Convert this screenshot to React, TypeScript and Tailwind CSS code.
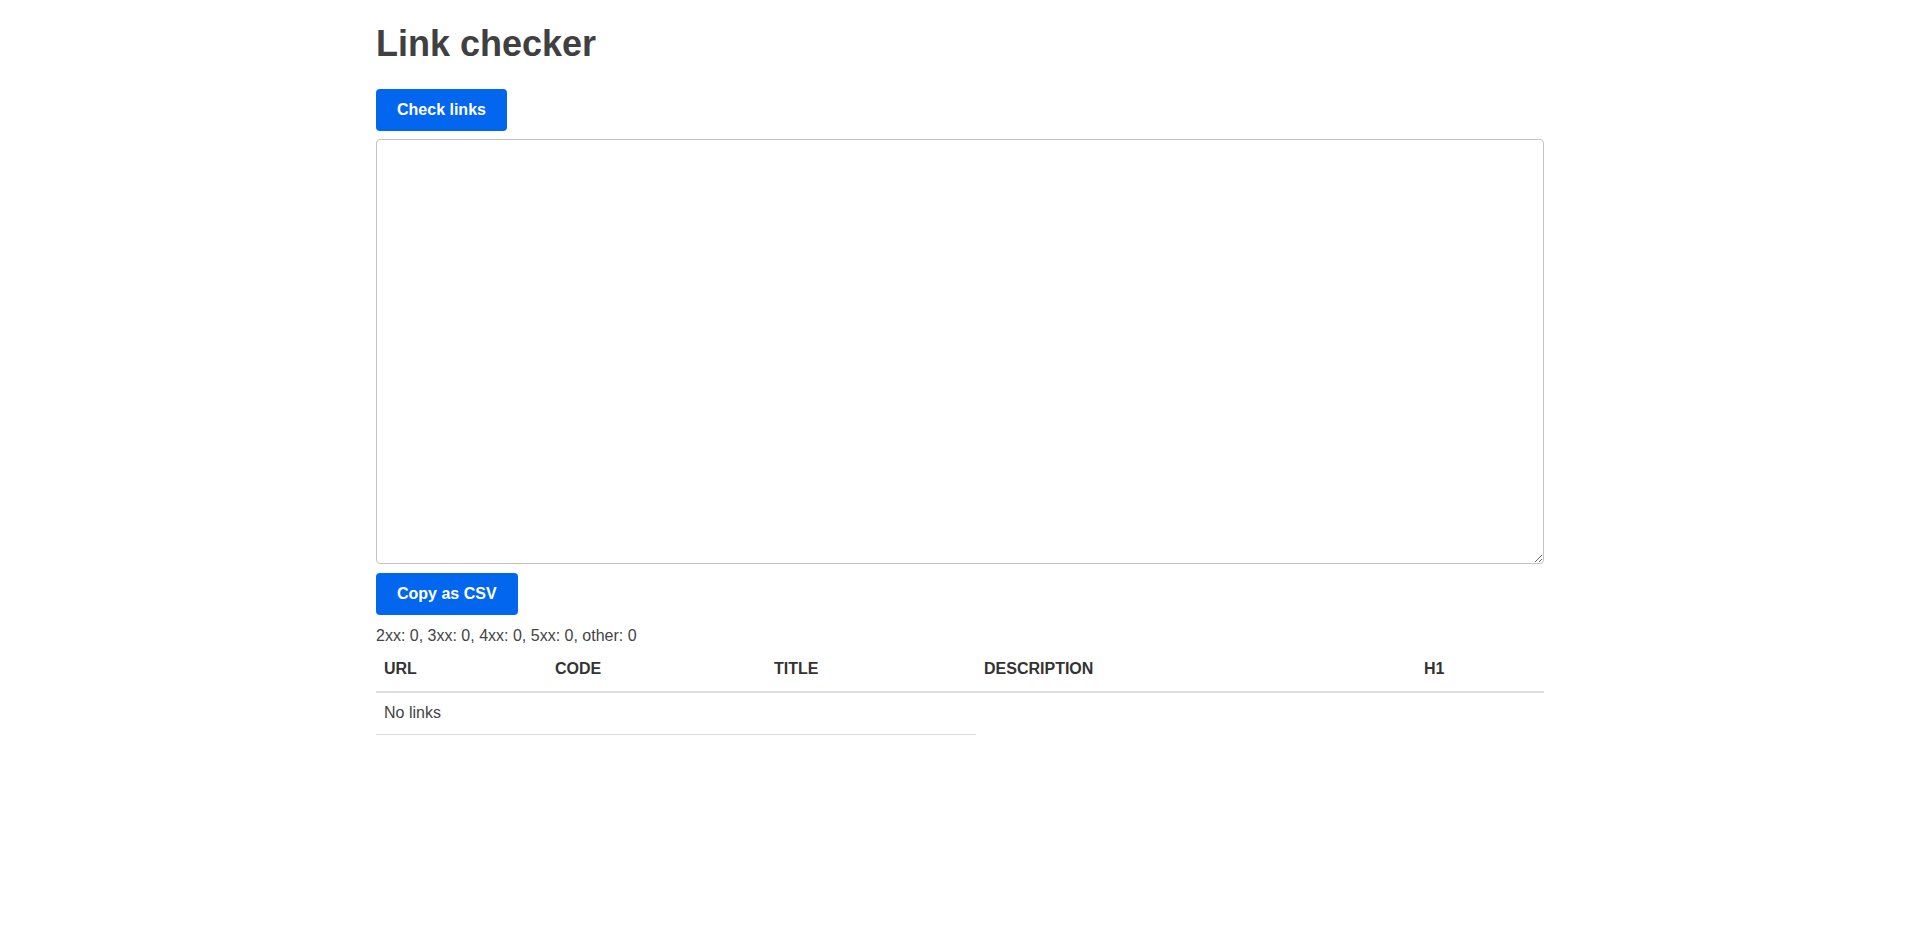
import React from "react";

export default function App() {
  return (
    <div className="min-h-screen bg-white">
      <div className="mx-auto max-w-[1200px] px-4 font-['Liberation_Sans',Arial,sans-serif] text-[16px] leading-6 text-[#444444]">
        <h1 className="pt-[22px] mb-6 text-[36px] font-bold leading-[43px] text-[#404040]">Link checker</h1>
        <button className="h-[42px] px-[21px] rounded bg-[#0366ee] text-white font-bold text-[16px] leading-6">
          Check links
        </button>
        <textarea className="block mt-2 w-full h-[425px] border border-[#c4c4c4] rounded bg-white" />
        <button className="mt-[9px] h-[42px] px-[21px] rounded bg-[#0366ee] text-white font-bold text-[16px] leading-6">
          Copy as CSV
        </button>
        <div className="mt-[9px]">2xx: 0, 3xx: 0, 4xx: 0, 5xx: 0, other: 0</div>
        <table className="w-full border-collapse table-fixed">
          <colgroup>
            <col className="w-[171px]" />
            <col className="w-[219px]" />
            <col className="w-[210px]" />
            <col className="w-[440px]" />
            <col className="w-[128px]" />
          </colgroup>
          <thead>
            <tr className="border-b-2 border-[#dddddd]">
              <th className="px-2 pt-[9px] pb-[10px] text-left font-bold uppercase text-[#333333]">URL</th>
              <th className="px-2 pt-[9px] pb-[10px] text-left font-bold uppercase text-[#333333]">Code</th>
              <th className="px-2 pt-[9px] pb-[10px] text-left font-bold uppercase text-[#333333]">Title</th>
              <th className="px-2 pt-[9px] pb-[10px] text-left font-bold uppercase text-[#333333]">Description</th>
              <th className="px-2 pt-[9px] pb-[10px] text-left font-bold uppercase text-[#333333]">H1</th>
            </tr>
          </thead>
          <tbody>
            <tr>
              <td colSpan={3} className="px-2 pt-2 pb-[9px] border-b border-[#dddddd]">No links</td>
            </tr>
          </tbody>
        </table>
      </div>
    </div>
  );
}
